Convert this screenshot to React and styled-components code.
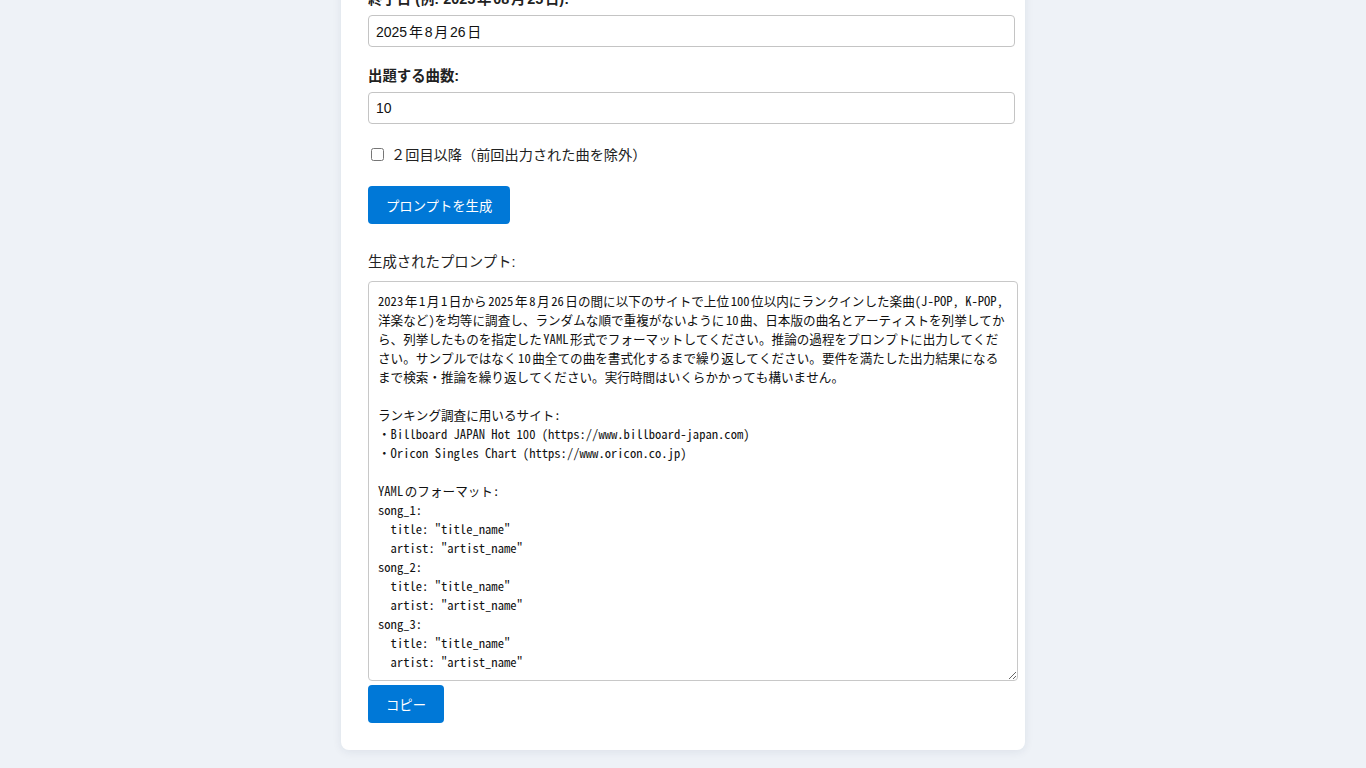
import React, { useState } from "react";
import styled, { createGlobalStyle } from "styled-components";

const GlobalStyle = createGlobalStyle`
  html, body {
    margin: 0;
    padding: 0;
    background: #eef2f7;
  }
  body {
    font-family: "Liberation Sans", "Noto Sans CJK JP", sans-serif;
    color: #222;
    font-size: 14px;
    text-autospace: normal;
  }
  input, textarea, button, label {
    text-autospace: normal;
  }
`;

const Page = styled.div`
  padding-bottom: 18px;
`;

const Card = styled.main`
  box-sizing: border-box;
  width: 684px;
  margin: -115px auto 0;
  padding: 27px;
  background: #fff;
  border-radius: 8px;
  box-shadow: 0 2px 10px rgba(20, 40, 80, 0.08);
`;

const Field = styled.div`
  margin-bottom: 19px;
`;

const Label = styled.label`
  display: block;
  font-weight: ${(p) => (p.$plain ? 400 : 700)};
  font-size: 14.4px;
  line-height: 20px;
  margin-bottom: ${(p) => (p.$gap ? p.$gap : 6)}px;
`;

const Input = styled.input`
  display: block;
  box-sizing: border-box;
  width: calc(100% + 17px);
  height: 32px;
  padding: 0 7px;
  border: 1px solid #c4c4c4;
  border-radius: 4px;
  font-family: "Liberation Sans", "Noto Sans CJK JP", sans-serif;
  font-size: 14px;
  color: #111;
  background: #fff;
`;

const CheckRow = styled.div`
  display: flex;
  align-items: center;
  height: 22px;
  margin-bottom: 21px;
  font-size: 14.2px;
`;

const Check = styled.input`
  width: 13px;
  height: 13px;
  margin: 1px 7px 0 3px;
`;

const Button = styled.button`
  display: block;
  height: 38px;
  padding: 0 18px;
  border: none;
  border-radius: 4px;
  background: #0078d7;
  color: #fff;
  font-family: "Liberation Sans", "Noto Sans CJK JP", sans-serif;
  font-size: 13.333px;
  cursor: pointer;
  margin-top: ${(p) => p.$top || 0}px;
`;

const Result = styled.section`
  margin-top: 28px;
`;

const Output = styled.textarea`
  display: block;
  box-sizing: content-box;
  width: 100%;
  height: 380px;
  margin: 0;
  padding: 9px;
  border: 1px solid #c8c8c8;
  border-radius: 4px;
  font-family: "Noto Sans Mono CJK JP", "Noto Sans CJK JP", monospace;
  font-size: 12.6px;
  line-height: 19px;
  color: #111;
  background: #fff;
  scrollbar-width: none;
  &::-webkit-scrollbar {
    display: none;
  }
`;

const songs = Array.from({ length: 3 }, (_, i) =>
  `song_${i + 1}:\n  title: "title_name"\n  artist: "artist_name"`
).join("\n");

const prompt =
  "2023年1月1日から2025年8月26日の間に以下のサイトで上位100位以内にランクインした楽曲(J-POP, K-POP, 洋楽など)を均等に調査し、ランダムな順で重複がないように10曲、日本版の曲名とアーティストを列挙してから、列挙したものを指定したYAML形式でフォーマットしてください。推論の過程をプロンプトに出力してください。サンプルではなく10曲全ての曲を書式化するまで繰り返してください。要件を満たした出力結果になるまで検索・推論を繰り返してください。実行時間はいくらかかっても構いません。\n\n" +
  "ランキング調査に用いるサイト:\n" +
  "・Billboard JAPAN Hot 100 (https://www.billboard-japan.com)\n" +
  "・Oricon Singles Chart (https://www.oricon.co.jp)\n\n" +
  "YAMLのフォーマット:\n" +
  songs;

export default function App() {
  const [start, setStart] = useState("2023年1月1日");
  const [end, setEnd] = useState("2025年8月26日");
  const [count, setCount] = useState("10");
  const [again, setAgain] = useState(false);

  return (
    <Page lang="ja">
      <GlobalStyle />
      <Card>
        <Field>
          <Label htmlFor="start">開始日 (例: 2023年01月01日):</Label>
          <Input id="start" value={start} onChange={(e) => setStart(e.target.value)} />
        </Field>
        <Field>
          <Label htmlFor="end">終了日 (例: 2025年08月25日):</Label>
          <Input id="end" value={end} onChange={(e) => setEnd(e.target.value)} />
        </Field>
        <Field>
          <Label htmlFor="count">出題する曲数:</Label>
          <Input id="count" value={count} onChange={(e) => setCount(e.target.value)} />
        </Field>
        <CheckRow>
          <Check
            type="checkbox"
            id="again"
            checked={again}
            onChange={(e) => setAgain(e.target.checked)}
          />
          <label htmlFor="again">２回目以降（前回出力された曲を除外）</label>
        </CheckRow>
        <Button type="button">プロンプトを生成</Button>
        <Result>
          <Label $plain $gap={9} htmlFor="out">生成されたプロンプト:</Label>
          <Output id="out" readOnly value={prompt} />
          <Button type="button" $top={4}>コピー</Button>
        </Result>
      </Card>
    </Page>
  );
}
